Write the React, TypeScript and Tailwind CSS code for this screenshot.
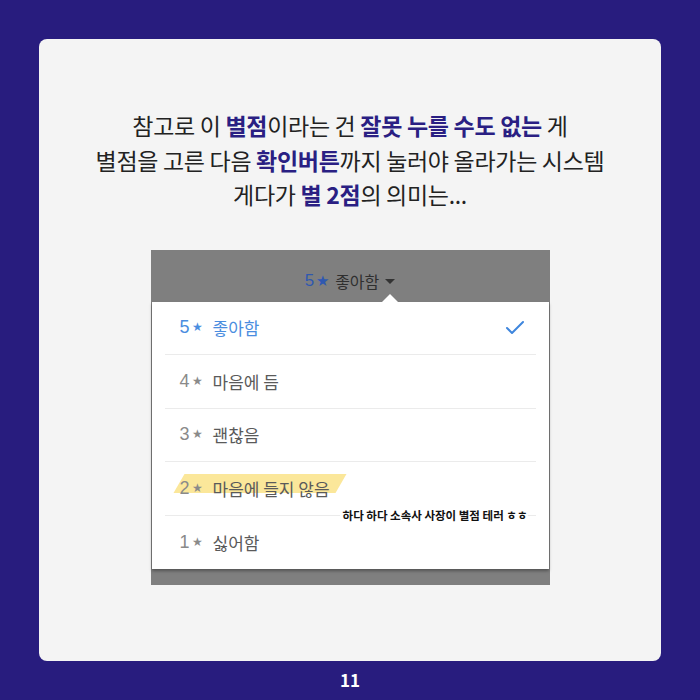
import { Check } from "lucide-react";

const rows = [
  { n: 5, label: "좋아함", active: true },
  { n: 4, label: "마음에 듬" },
  { n: 3, label: "괜찮음" },
  { n: 2, label: "마음에 들지 않음", marked: true },
  { n: 1, label: "싫어함" },
];

const B = ({ children }: { children: React.ReactNode }) => (
  <span className="font-bold text-[#2a1f83]">{children}</span>
);

export default function App() {
  return (
    <div
      className="w-[700px] h-[700px] bg-[#281c7e] flex flex-col items-center pt-[39px]"
      style={{ fontFamily: '"Noto Sans CJK KR", "Noto Sans", sans-serif' }}
    >
      <div className="w-[622px] h-[622px] bg-[#f4f4f4] rounded-[8px] flex flex-col items-center">
        <div className="mt-[69px] text-center text-[23px] leading-[34.5px] text-[#222] tracking-[-0.3px]">
          <p>
            참고로 이 <B>별점</B>이라는 건 <B>잘못 누를 수도 없는</B> 게
          </p>
          <p>
            별점을 고른 다음 <B>확인버튼</B>까지 눌러야 올라가는 시스템
          </p>
          <p>
            게다가 <B>별 2점</B>의 의미는...
          </p>
        </div>

        {/* rating picker screenshot */}
        <div className="mt-[38px] w-[399px] bg-[#7f7f7f] flex flex-col">
          <div className="h-[52px] flex items-end justify-center pb-[8px] relative">
            <span className="text-[16px] text-[#2f2f2f] flex items-center gap-[6px]">
              <span className="text-[#2f58b0] font-['Liberation_Sans',sans-serif] text-[17px] font-medium">
                5<span className="text-[15px] ml-[2px]">★</span>
              </span>
              <span>좋아함</span>
              <span className="w-0 h-0 border-l-[5px] border-r-[5px] border-t-[5px] border-l-transparent border-r-transparent border-t-[#333] mt-[2px]" />
            </span>
            <span className="absolute bottom-0 left-[231px] w-0 h-0 border-l-[8px] border-r-[8px] border-b-[8px] border-l-transparent border-r-transparent border-b-white" />
          </div>
          <div className="bg-white mx-[1px] px-[13px] shadow-[0_2px_3px_rgba(0,0,0,0.35)]">
            {rows.map((r, i) => (
              <div
                key={r.n}
                className={`h-[53.5px] flex items-center relative ${i < rows.length - 1 ? "border-b border-[#ebebeb]" : ""}`}
              >
                {r.marked && (
                  <span className="absolute left-[14px] top-[12px] w-[162px] h-[19px] bg-[#fbe79a] -skew-x-[30deg]" />
                )}
                <span
                  className={`relative pl-[15px] text-[17px] flex items-center ${r.active ? "text-[#4a8de0]" : "text-[#5a5a5a]"}`}
                >
                  <span
                    className={`w-[33px] font-['Liberation_Sans',sans-serif] text-[18px] ${r.active ? "" : "text-[#8a8a8a]"}`}
                  >
                    {r.n}
                    <span className="text-[12px] ml-[2px] relative top-[-2px]">★</span>
                  </span>
                  <span>{r.label}</span>
                </span>
                {r.active && <Check className="absolute right-[9px] w-[24px] h-[24px] text-[#3f86dd]" strokeWidth={2} />}
                {r.marked && (
                  <span className="absolute right-[8px] bottom-[-8px] bg-white/90 pl-[3px] text-[11.5px] font-bold text-[#111] leading-[15px]">
                    하다 하다 소속사 사장이 별점 테러 ㅎㅎ
                  </span>
                )}
              </div>
            ))}
          </div>
          <div className="h-[16px]" />
        </div>
      </div>
      <div className="mt-[6px] text-white font-bold text-[17px]">11</div>
    </div>
  );
}
